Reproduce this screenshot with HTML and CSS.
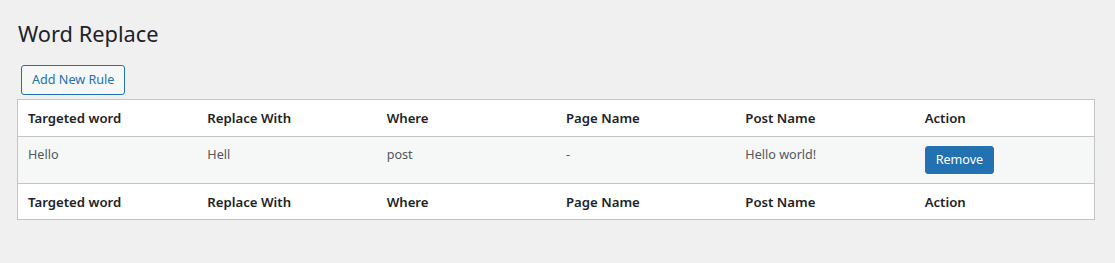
FILE: index.html
```html
<!DOCTYPE html>
<html lang="en">
<head>
<meta charset="utf-8">
<title>Word Replace</title>
<link rel="stylesheet" href="styles.css">
</head>
<body>
<div class="wrap">
  <h1 class="title">Word Replace</h1>
  <div class="actions"><button class="btn-secondary" type="button">Add New Rule</button></div>
  <table class="widefat">
    <thead>
      <tr><th>Targeted word</th><th>Replace With</th><th>Where</th><th>Page Name</th><th>Post Name</th><th>Action</th></tr>
    </thead>
    <tbody>
      <tr class="alt"><td>Hello</td><td>Hell</td><td>post</td><td>-</td><td>Hello world!</td><td><button class="btn-primary" type="button">Remove</button></td></tr>
    </tbody>
    <tfoot>
      <tr><th>Targeted word</th><th>Replace With</th><th>Where</th><th>Page Name</th><th>Post Name</th><th>Action</th></tr>
    </tfoot>
  </table>
</div>
</body>
</html>
```
FILE: styles.css
```css
html, body { margin: 0; padding: 0; }
body {
  background: #f0f0f1;
  color: #3c434a;
  font-family: "Noto Sans", "Open Sans", sans-serif;
  font-size: 13px;
  line-height: 1.4;
  width: 1115px;
  height: 263px;
  overflow: hidden;
}
.wrap { padding: 0 20px 0 17px; }
.title {
  margin: 0;
  padding: 19px 0 0 1px;
  font-size: 21.8px;
  font-weight: 400;
  line-height: 29px;
  color: #1d2327;
}
.actions { padding: 17px 0 4px 4px; }
button { font-family: inherit; cursor: pointer; }
.btn-secondary {
  height: 30px;
  padding: 0 10px;
  border: 1px solid #2271b1;
  border-radius: 3px;
  background: #f6f7f7;
  color: #2271b1;
  font-size: 12.6px;
  line-height: 28px;
  display: block;
}
.widefat {
  width: 100%;
  border: 1px solid #c3c4c7;
  border-spacing: 0;
  border-collapse: separate;
  background: #fff;
  table-layout: fixed;
}
.widefat th {
  text-align: left;
  font-weight: 600;
  font-size: 13.2px;
  color: #1d2327;
  padding: 8px 10px;
  height: 20px;
  line-height: 20px;
}
.widefat thead th { border-bottom: 1px solid #c3c4c7; }
.widefat tfoot th {
  border-top: 1px solid #c3c4c7;
  padding-bottom: 7px;
}
.widefat td {
  padding: 8px 10px 8px;
  vertical-align: top;
  color: #50575e;
  font-size: 12.6px;
  line-height: 19px;
  height: 30px;
}
.widefat tr.alt td { background: #f6f7f7; }
.btn-primary {
  margin-top: 1px;
  height: 28px;
  padding: 0 10px;
  border: 1px solid #2271b1;
  border-radius: 3px;
  background: #2271b1;
  color: #fff;
  font-size: 12.6px;
  line-height: 26px;
}
```
